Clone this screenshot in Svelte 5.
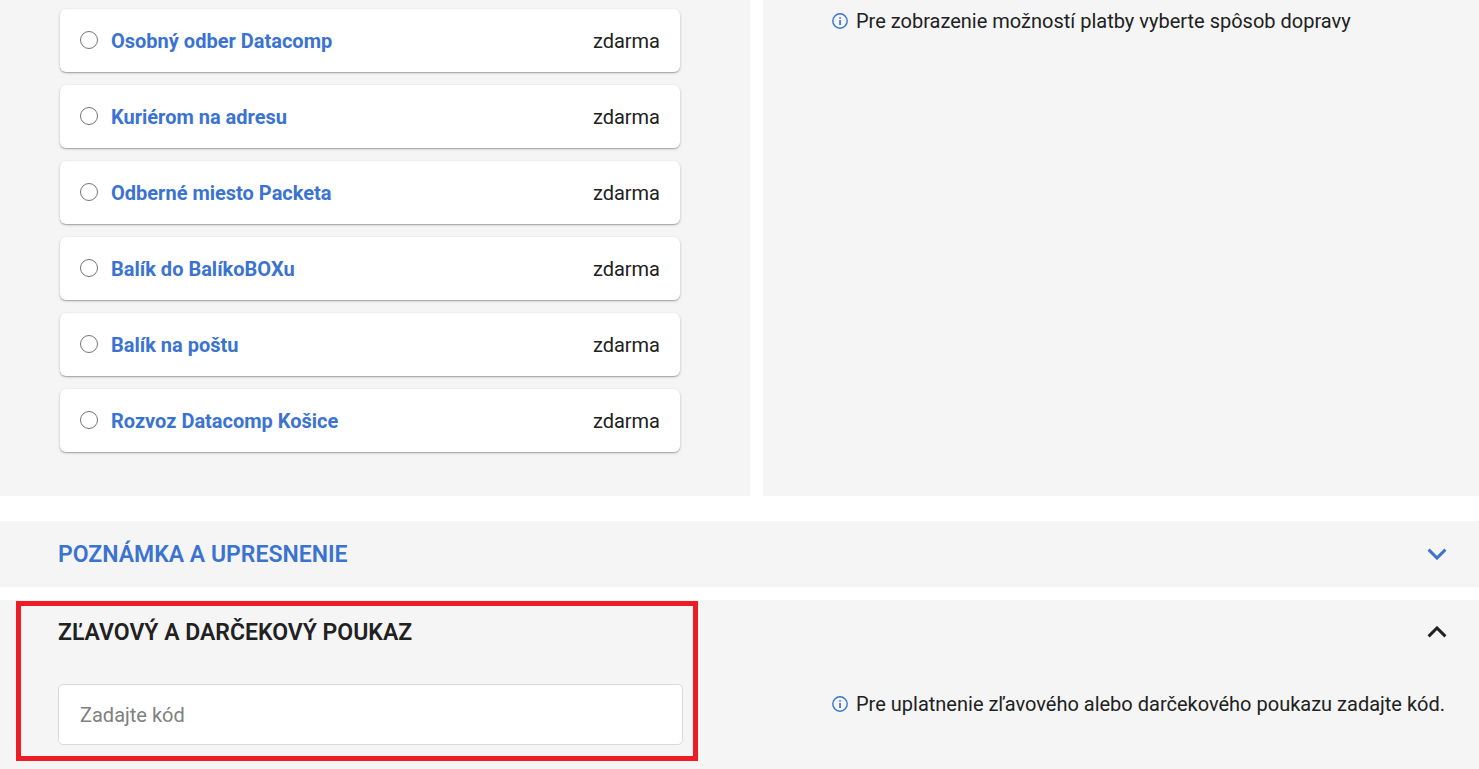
<script>
  const shipping = [
    { id: "osobny", name: "Osobný odber Datacomp", price: "zdarma" },
    { id: "kurier", name: "Kuriérom na adresu", price: "zdarma" },
    { id: "packeta", name: "Odberné miesto Packeta", price: "zdarma" },
    { id: "balikobox", name: "Balík do BalíkoBOXu", price: "zdarma" },
    { id: "posta", name: "Balík na poštu", price: "zdarma" },
    { id: "rozvoz", name: "Rozvoz Datacomp Košice", price: "zdarma" },
  ];

  let selected = $state(null);
  let noteOpen = $state(false);
  let voucherOpen = $state(true);
  let note = $state("");
  let code = $state("");
</script>

{#snippet info(text)}
  <p class="info">
    <svg class="info-icon" viewBox="0 0 16 16" aria-hidden="true">
      <circle cx="8" cy="8" r="7.2" fill="none" stroke="currentColor" stroke-width="1.4" />
      <path d="M7.2 4.2h1.7v1.6H7.2zM7.2 7h1.7v5H7.2z" fill="currentColor" />
    </svg>
    <span>{text}</span>
  </p>
{/snippet}

{#snippet chevron(open)}
  <svg class="chevron" class:up={open} viewBox="0 0 20 12" aria-hidden="true">
    <path d="M1.6 1.6 10 10l8.4-8.4" fill="none" stroke="currentColor" stroke-width="3" />
  </svg>
{/snippet}

<main>
  <div class="columns">
    <section class="panel shipping">
      {#each shipping as s (s.id)}
        <label class="option">
          <input type="radio" name="shipping" value={s.id} bind:group={selected} />
          <span class="option-name">{s.name}</span>
          <span class="option-price">{s.price}</span>
        </label>
      {/each}
    </section>
    <section class="panel payment">
      {@render info("Pre zobrazenie možností platby vyberte spôsob dopravy")}
    </section>
  </div>

  <section class="panel fold">
    <h2>
      <button class="fold-head" aria-expanded={noteOpen} onclick={() => (noteOpen = !noteOpen)}>
        <span>POZNÁMKA A UPRESNENIE</span>
        {@render chevron(noteOpen)}
      </button>
    </h2>
    {#if noteOpen}
      <div class="fold-field">
        <textarea class="field" aria-label="Poznámka" rows="3" bind:value={note}></textarea>
      </div>
    {/if}
  </section>

  <section class="panel fold">
    <h2>
      <button class="fold-head" aria-expanded={voucherOpen} onclick={() => (voucherOpen = !voucherOpen)}>
        <span>ZĽAVOVÝ A DARČEKOVÝ POUKAZ</span>
        {@render chevron(voucherOpen)}
      </button>
    </h2>
    {#if voucherOpen}
      <div class="fold-field">
        <input class="field" type="text" placeholder="Zadajte kód" aria-label="Zadajte kód" bind:value={code} />
      </div>
      <div class="fold-info">
        {@render info("Pre uplatnenie zľavového alebo darčekového poukazu zadajte kód.")}
      </div>
      <div class="highlight"></div>
    {/if}
  </section>
</main>

<style>
  :global(body) { background: #fff; }
  main {
    --blue: #3b73d1;
    --txt: #212121;
    display: flex;
    flex-direction: column;
    gap: 13px;
    font-family: Roboto, sans-serif;
    font-size: 20px;
    line-height: 24px;
    color: var(--txt);
  }
  .columns, .fold { display: grid; grid-template-columns: 750fr 716fr; column-gap: 13px; }
  .columns { margin-bottom: 12px; }
  .panel { background: #f5f5f5; }

  .shipping { display: flex; flex-direction: column; gap: 13px; padding: 9px 70px 44px 60px; }
  .option {
    display: flex;
    align-items: center;
    box-sizing: border-box;
    height: 63px;
    padding: 0 20px;
    background: #fff;
    border-radius: 6px;
    box-shadow: 0 1px 3px rgba(0, 0, 0, .2), 0 1px 1px rgba(0, 0, 0, .2);
    cursor: pointer;
  }
  .option input {
    appearance: none;
    flex: none;
    width: 18px;
    height: 18px;
    margin: 0 13px 2px 0;
    border: 1px solid #767676;
    border-radius: 50%;
    background: #fff;
  }
  .option input:checked { border-color: var(--blue); background: radial-gradient(var(--blue) 45%, #fff 50%); }
  .option-name { flex: 1; font-weight: 700; color: var(--blue); }

  .payment { padding: 9px 24px 24px 69px; }
  .info { display: flex; gap: 8px; margin: 0; }
  .info-icon { flex: none; width: 16px; height: 16px; margin-top: 4px; color: var(--blue); }

  h2 { grid-column: 1 / -1; margin: 0; font: inherit; }
  .fold { position: relative; }
  .fold-head {
    display: flex;
    align-items: center;
    justify-content: space-between;
    width: 100%;
    height: 66px;
    padding: 0 32px 0 58px;
    border: 0;
    background: none;
    font-family: inherit;
    font-size: 23px;
    font-weight: 600;
    color: var(--blue);
    cursor: pointer;
  }
  .fold-head[aria-expanded="true"] { height: 64px; color: var(--txt); }
  .chevron { width: 20px; height: 12px; }
  .chevron.up { transform: rotate(180deg); }
  .fold-field { padding: 20px 67px 24px 58px; }
  .field {
    display: block;
    box-sizing: border-box;
    width: 100%;
    height: 61px;
    padding: 0 21px;
    border: 1px solid #dadada;
    border-radius: 5px;
    background: #fff;
    font: inherit;
    color: inherit;
  }
  textarea.field { height: auto; padding: 12px 21px; }
  .field::placeholder { color: #808080; opacity: 1; }
  .fold-info { padding: 28px 24px 24px 69px; }

  /* frame drawn over the voucher form */
  .highlight {
    position: absolute;
    grid-column: 1 / 2;
    inset: 1px 52px 8px 16px;
    border: 5px solid #ee1c25;
    pointer-events: none;
  }
</style>
